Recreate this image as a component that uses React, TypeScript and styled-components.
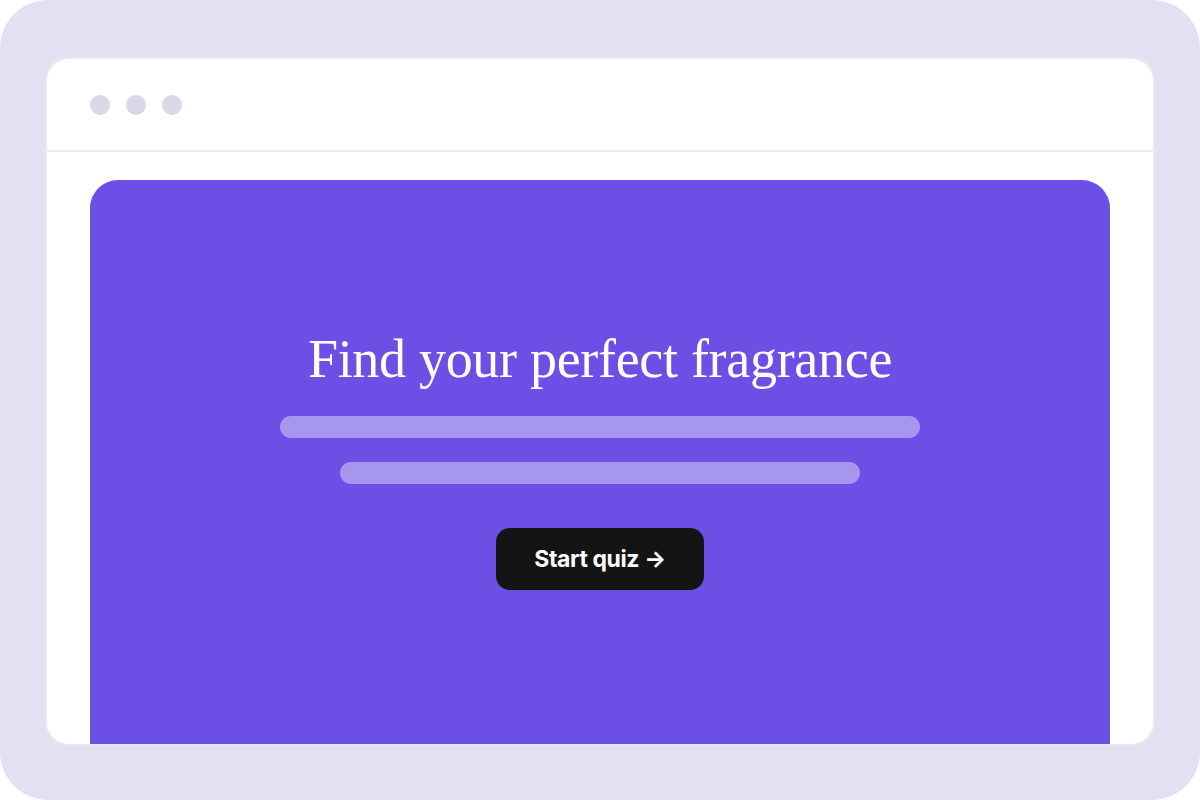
import React from 'react';
import styled, { createGlobalStyle } from 'styled-components';

const GlobalStyle = createGlobalStyle`
  html, body {
    margin: 0;
    padding: 0;
    background: #ffffff;
  }
  * {
    box-sizing: border-box;
  }
`;

const Frame = styled.div`
  width: 1200px;
  height: 800px;
  background: #e4e0f4;
  border-radius: 48px;
  padding: 57px 45px 54px;
  display: flex;
`;

const Window = styled.div`
  flex: 1;
  display: flex;
  flex-direction: column;
  background: #ffffff;
  border: 2px solid #ebe8f1;
  border-radius: 24px;
  overflow: hidden;
`;

const TitleBar = styled.div`
  height: 93px;
  flex-shrink: 0;
  display: flex;
  align-items: center;
  gap: 16px;
  padding-left: 43px;
  border-bottom: 2px solid #eeecf2;
`;

const Dot = styled.span`
  width: 20px;
  height: 20px;
  border-radius: 50%;
  background: #dbd6e8;
`;

const Viewport = styled.div`
  flex: 1;
  display: flex;
  padding: 28px 43px 0;
  min-height: 0;
`;

const Hero = styled.section`
  flex: 1;
  background: #6c50e6;
  border-radius: 28px 28px 0 0;
  display: flex;
  flex-direction: column;
  align-items: center;
  justify-content: center;
`;

const Title = styled.h1`
  margin: 0 0 32px;
  color: #ffffff;
  font-family: 'Liberation Serif', 'DejaVu Serif', serif;
  font-weight: 400;
  font-size: 54px;
  line-height: 50px;
  letter-spacing: -0.3px;
`;

const Line = styled.div<{ $width: number }>`
  width: ${(p) => p.$width}px;
  height: 22px;
  border-radius: 11px;
  background: rgba(255, 255, 255, 0.4);
  margin-bottom: 24px;
`;

const Button = styled.button`
  margin-top: 20px;
  width: 208px;
  height: 62px;
  border: none;
  border-radius: 14px;
  background: #141414;
  color: #ffffff;
  font-family: Inter, 'Liberation Sans', sans-serif;
  font-weight: 700;
  font-size: 23px;
  letter-spacing: -0.4px;
  cursor: pointer;
`;

export default function App() {
  return (
    <>
      <GlobalStyle />
      <Frame>
        <Window>
          <TitleBar>
            <Dot />
            <Dot />
            <Dot />
          </TitleBar>
          <Viewport>
            <Hero>
              <Title>Find your perfect fragrance</Title>
              <Line $width={640} />
              <Line $width={520} />
              <Button>Start quiz →</Button>
            </Hero>
          </Viewport>
        </Window>
      </Frame>
    </>
  );
}
